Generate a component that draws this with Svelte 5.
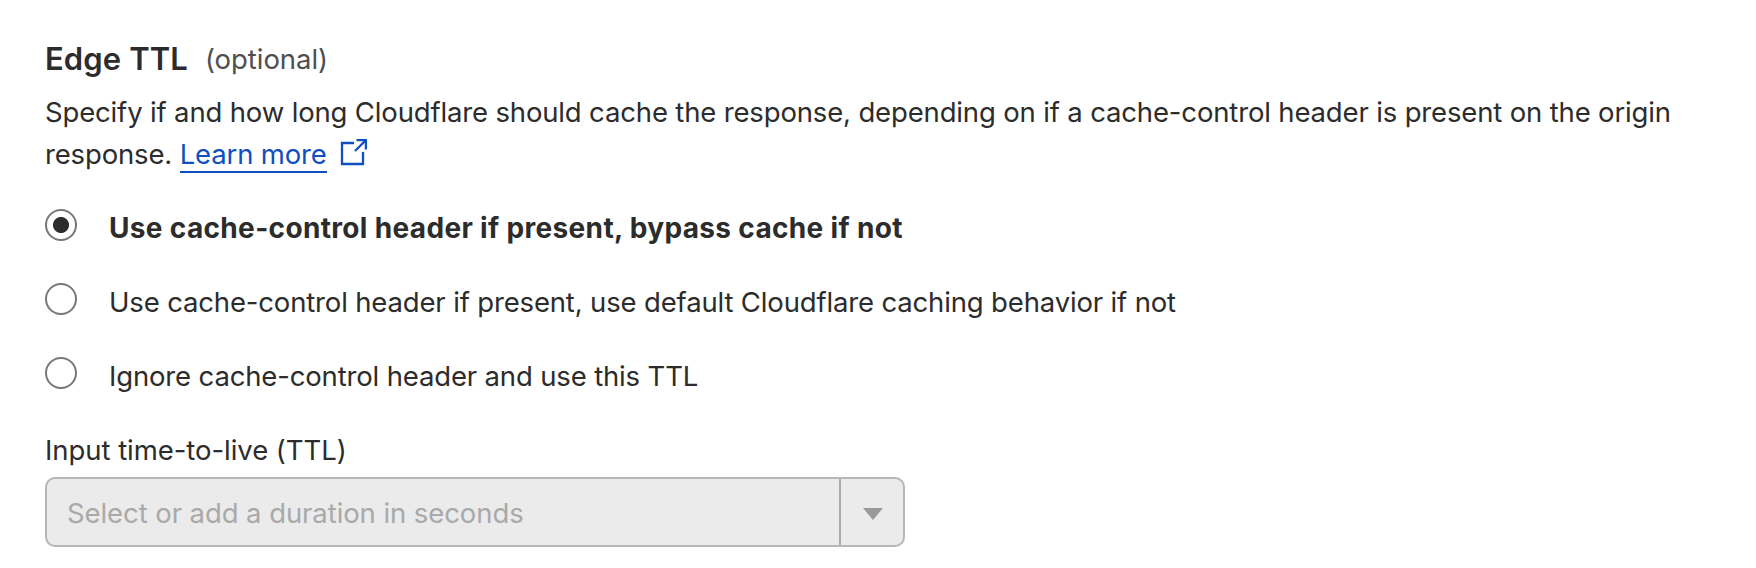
<script>
  const options = [
    'Use cache-control header if present, bypass cache if not',
    'Use cache-control header if present, use default Cloudflare caching behavior if not',
    'Ignore cache-control header and use this TTL'
  ];
  let selected = $state(0);
</script>

<main>
  <header><h2>Edge TTL</h2><span class="optional">(optional)</span></header>
  <p>
    <span>Specify if and how long Cloudflare should cache the response, depending on if a cache-control header is present on the origin</span><br />
    <span class="more"><span>response. <a href="#learn">Learn more</a></span>
      <svg width="28" height="28" viewBox="0 0 28 28" fill="none" stroke="#0f4fc0" stroke-width="2.3">
        <path d="M14 5H2v21h21V14M16.5 2.1h9.4v9.4M26 2 15 13" />
      </svg>
    </span>
  </p>
  <div class="options">
    {#each options as option, i}
      <label class:bold={selected === i}>
        <input type="radio" name="ttl" value={i} bind:group={selected} />
        <span class="dot"></span>
        <span>{option}</span>
      </label>
    {/each}
  </div>
  <div class="field">Input time-to-live (TTL)</div>
  <div class="combo">
    <span>Select or add a duration in seconds</span>
    <div class="arrow"><svg width="20" height="12" viewBox="0 0 20 12"><path d="M0 0h20L10 12z" fill="#999" /></svg></div>
  </div>
</main>

<style>
  :global(body) { background: #fff; }
  main { box-sizing: border-box; height: 568px; padding: 38px 45px; font-family: Inter, sans-serif; font-size: 27.5px; letter-spacing: -0.155px; line-height: 42px; color: #2c2c2c; white-space: nowrap; }
  header { display: flex; align-items: flex-start; gap: 17px; height: 53px; }
  h2 { margin: 0; font-size: 31px; font-weight: 600; line-height: 42px; letter-spacing: 0.1px; }
  .optional { color: #4f4f4f; letter-spacing: -0.04px; }
  p { margin: 0; height: 84px; }
  .more { display: flex; align-items: flex-start; gap: 13px; }
  .more svg { margin-top: 5px; }
  a { color: #0f4fc0; text-decoration: none; border-bottom: 2px solid; }
  .options { padding-top: 32px; }
  label { display: flex; height: 74px; }
  input { position: absolute; opacity: 0; }
  .dot { box-sizing: border-box; width: 32px; height: 32px; border: 2px solid #777; border-radius: 50%; margin: 2px 32px 0 0; }
  .bold { font-weight: 700; font-size: 28px; letter-spacing: 0.34px; }
  .bold .dot { background: radial-gradient(circle, #2c2c2c 7.6px, transparent 8.4px); }
  .field { height: 49px; letter-spacing: -0.05px; }
  .combo { box-sizing: border-box; display: flex; width: 860px; height: 70px; margin-top: -1px; border: 2px solid #b6b6b6; border-radius: 10px; background: #ebebeb; color: #a9a9a9; align-items: center; padding-left: 20px; letter-spacing: -0.08px; }
  .combo > span { padding-top: 2px; }
  .arrow { box-sizing: border-box; margin-left: auto; width: 64px; height: 100%; border-left: 2px solid #aaa; display: grid; place-items: center; padding: 3px 0 0 2px; }
</style>
